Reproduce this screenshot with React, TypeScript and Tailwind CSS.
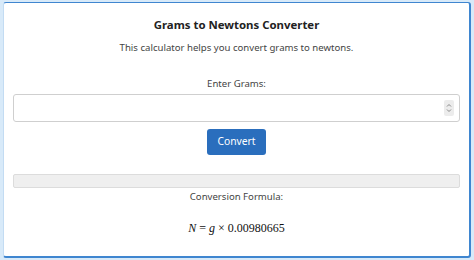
export default function App() {
  return (
    <div className="h-[260px] w-[474px] bg-[#d8eaf9] pl-[3px] pr-[3px] pt-[2px] pb-[2px]">
      <div
        className="flex h-full flex-col items-center rounded-[3px] border-t border-r-2 border-b-2 border-l border-t-[#3f86d0] border-r-[#3f86d0] border-b-[#3f86d0] border-l-[#c3dcf3] bg-white px-[9px] pt-[13px] text-[#333]"
        style={{ fontFamily: '"Noto Sans", "Open Sans", sans-serif' }}
      >
        <h1 className="text-[11.4px] font-bold leading-[18px] text-[#222]">
          Grams to Newtons Converter
        </h1>
        <p className="mt-[5px] text-[9.6px] leading-[18px] text-[#444]">
          This calculator helps you convert grams to newtons.
        </p>
        <label className="mt-[18px] text-[9.6px] leading-[18px] text-[#444]">
          Enter Grams:
        </label>
        <div className="mt-[1px] flex h-[28px] w-full items-center justify-end rounded-[3px] border border-[#cfcfcf] bg-white pr-[5px]">
          <div className="flex h-[16px] w-[10px] flex-col items-center justify-center rounded-[2px] bg-[#ececec]">
            <svg width="6" height="12" viewBox="0 0 6 12" fill="none" stroke="#888" strokeWidth="1">
              <path d="M1 4.5 L3 2.5 L5 4.5" />
              <path d="M1 7.5 L3 9.5 L5 7.5" />
            </svg>
          </div>
        </div>
        <button className="mt-[7px] h-[26px] w-[59px] rounded-[3px] bg-[#2a6ebd] text-[10.3px] text-white">
          Convert
        </button>
        <div className="mt-[19px] h-[14px] w-full rounded-[2px] border border-[#dcdcdc] bg-[#efefef]" />
        <p className="text-[9.6px] leading-[18px] text-[#444]">Conversion Formula:</p>
        <p
          className="mt-[12px] text-[12px] leading-[20px] text-[#111]"
          style={{ fontFamily: '"Liberation Serif", "Times New Roman", serif' }}
        >
          <i>N</i> = <i>g</i> × 0.00980665
        </p>
      </div>
    </div>
  );
}
